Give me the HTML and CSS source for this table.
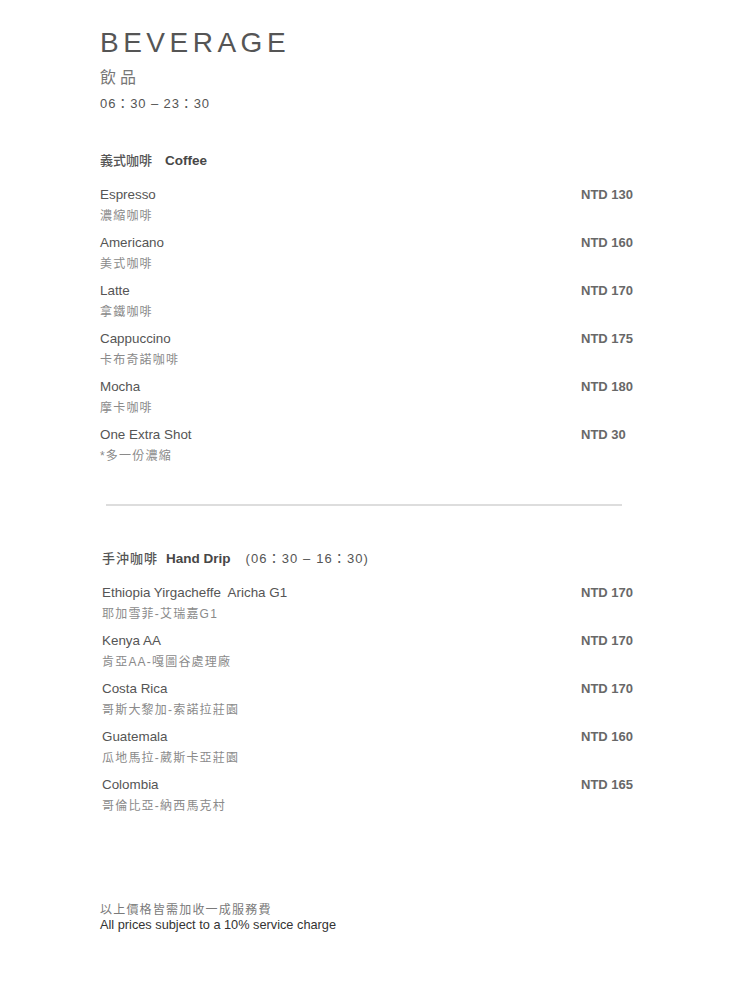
FILE: index.html
```html
<!DOCTYPE html>
<html lang="zh-Hant">
<head>
<meta charset="utf-8">
<title>Beverage</title>
<link rel="stylesheet" href="styles.css">
</head>
<body>
<main class="menu">
  <h1 class="title">BEVERAGE</h1>
  <div class="title-zh">飲品</div>
  <div class="hours">06：30 – 23：30</div>

  <section class="section">
    <h2 class="sec-head"><span class="zh">義式咖啡</span><span class="en en-coffee">Coffee</span></h2>
    <ul class="list">
      <li class="item"><span class="name">Espresso</span><span class="price">NTD 130</span><span class="sub">濃縮咖啡</span></li>
      <li class="item"><span class="name">Americano</span><span class="price">NTD 160</span><span class="sub">美式咖啡</span></li>
      <li class="item"><span class="name">Latte</span><span class="price">NTD 170</span><span class="sub">拿鐵咖啡</span></li>
      <li class="item"><span class="name">Cappuccino</span><span class="price">NTD 175</span><span class="sub">卡布奇諾咖啡</span></li>
      <li class="item"><span class="name">Mocha</span><span class="price">NTD 180</span><span class="sub">摩卡咖啡</span></li>
      <li class="item"><span class="name">One Extra Shot</span><span class="price">NTD 30</span><span class="sub">*多一份濃縮</span></li>
    </ul>
  </section>

  <hr class="divider">

  <section class="section section-drip">
    <h2 class="sec-head"><span class="zh zh-drip">手沖咖啡</span><span class="en en-drip">Hand Drip</span><span class="paren">(06：30 – 16：30)</span></h2>
    <ul class="list list-drip">
      <li class="item"><span class="name">Ethiopia Yirgacheffe&nbsp; Aricha G1</span><span class="price">NTD 170</span><span class="sub">耶加雪菲-艾瑞嘉G1</span></li>
      <li class="item"><span class="name">Kenya AA</span><span class="price">NTD 170</span><span class="sub">肯亞AA-嘎圖谷處理廠</span></li>
      <li class="item"><span class="name">Costa Rica</span><span class="price">NTD 170</span><span class="sub">哥斯大黎加-索諾拉莊園</span></li>
      <li class="item"><span class="name">Guatemala</span><span class="price">NTD 160</span><span class="sub">瓜地馬拉-葳斯卡亞莊園</span></li>
      <li class="item"><span class="name">Colombia</span><span class="price">NTD 165</span><span class="sub">哥倫比亞-納西馬克村</span></li>
    </ul>
  </section>

  <footer class="footer">
    <div class="foot-zh">以上價格皆需加收一成服務費</div>
    <div class="foot-en">All prices subject to a 10% service charge</div>
  </footer>
</main>
</body>
</html>
```

FILE: styles.css
```css
html, body {
  margin: 0;
  padding: 0;
  background: #ffffff;
}

body {
  font-family: "Liberation Sans", Arial, "Noto Sans CJK TC", sans-serif;
  color: #555555;
}

.menu {
  width: 533px;
  padding: 27px 0 0 100px;
}

.title {
  margin: 0;
  font-size: 28px;
  line-height: 32px;
  font-weight: normal;
  letter-spacing: 4.5px;
  color: #555555;
}

.title-zh {
  margin-top: 7px;
  font-family: "Noto Sans CJK TC", sans-serif;
  font-size: 16px;
  line-height: 20px;
  letter-spacing: 4px;
  color: #777777;
}

.hours {
  margin-top: 9px;
  font-size: 13px;
  line-height: 18px;
  letter-spacing: 0.9px;
  color: #555555;
}

.section {
  margin-top: 38px;
}

.sec-head {
  margin: 0;
  font-size: 13px;
  line-height: 18px;
  font-weight: normal;
  color: #555555;
}

.sec-head .zh {
  font-family: "Noto Sans CJK TC", sans-serif;
  font-weight: 500;
}

.sec-head .zh-drip {
  margin-left: 2px;
  letter-spacing: 1px;
}

.sec-head .en {
  font-weight: bold;
  color: #474747;
  font-size: 13.5px;
}

.en-coffee { margin-left: 13px; }
.en-drip { margin-left: 8px; }

.paren {
  margin-left: 15px;
  font-size: 13px;
  letter-spacing: 1.1px;
}

.list {
  list-style: none;
  margin: 16px 0 0;
  padding: 0;
  display: flex;
  flex-direction: column;
  gap: 9px;
}

.list-drip {
  padding-left: 2px;
}

.item {
  display: grid;
  grid-template-columns: 1fr 52px;
  row-gap: 3px;
}

.name {
  grid-column: 1;
  grid-row: 1;
  font-size: 13.4px;
  line-height: 18px;
  color: #555555;
}

.price {
  grid-column: 2;
  grid-row: 1;
  font-size: 13px;
  line-height: 18px;
  font-weight: bold;
  color: #686868;
  white-space: nowrap;
}

.sub {
  grid-column: 1;
  grid-row: 2;
  font-size: 12px;
  line-height: 18px;
  letter-spacing: 1.2px;
  color: #8a8a8a;
}

.divider {
  margin: 39px 0 0 6px;
  width: 516px;
  height: 2px;
  border: 0;
  background: #dddddd;
}

.section-drip {
  margin-top: 43px;
}

.footer {
  margin-top: 88px;
}

.foot-zh {
  font-size: 12px;
  line-height: 15px;
  letter-spacing: 1.2px;
  color: #7a7a7a;
}

.foot-en {
  font-size: 12.75px;
  line-height: 14px;
  color: #333333;
}
```
